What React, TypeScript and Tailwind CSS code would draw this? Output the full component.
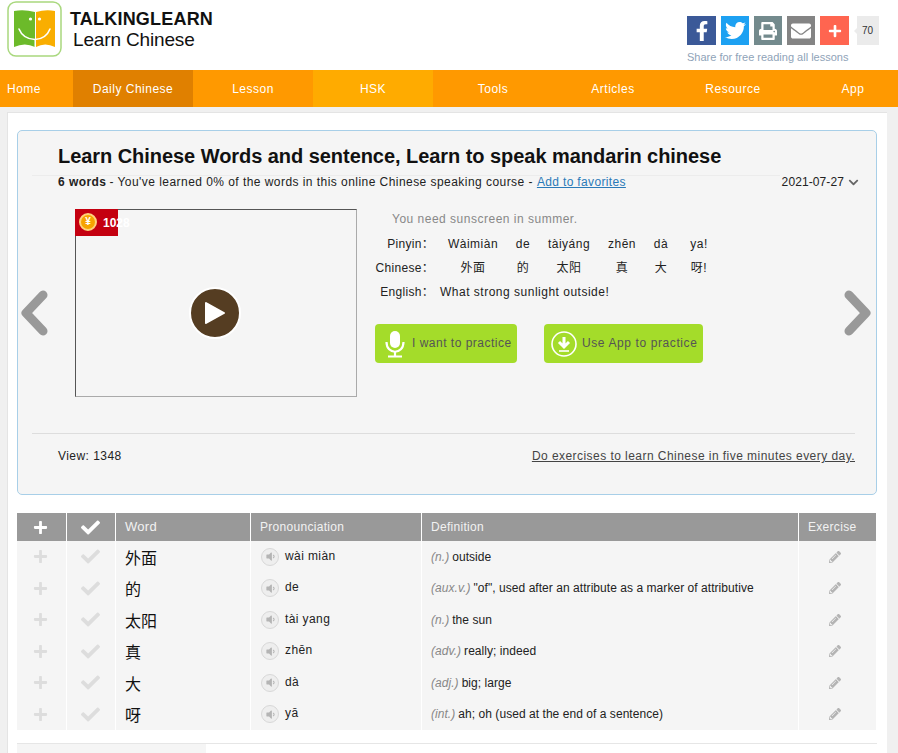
import React from "react";
import { FaFacebookF, FaTwitter, FaPrint, FaEnvelope, FaPlus, FaCheck, FaPencilAlt, FaVolumeDown, FaChevronDown } from "react-icons/fa";

const navItems = [
  { label: "Home", w: "w-[73px] justify-start pl-[7px]", bg: "" },
  { label: "Daily Chinese", w: "w-[120px] justify-center", bg: "bg-[#e08000]" },
  { label: "Lesson", w: "w-[120px] justify-center", bg: "" },
  { label: "HSK", w: "w-[120px] justify-center", bg: "bg-[#ffab00]" },
  { label: "Tools", w: "w-[120px] justify-center", bg: "" },
  { label: "Articles", w: "w-[120px] justify-center", bg: "" },
  { label: "Resource", w: "w-[120px] justify-center", bg: "" },
  { label: "App", w: "w-[120px] justify-center", bg: "" },
];

const rows = [
  { zh: "外面", py: "wài miàn", pos: "(n.)", def: "outside" },
  { zh: "的", py: "de", pos: "(aux.v.)", def: "\"of\", used after an attribute as a marker of attributive" },
  { zh: "太阳", py: "tài yang", pos: "(n.)", def: "the sun" },
  { zh: "真", py: "zhēn", pos: "(adv.)", def: "really; indeed" },
  { zh: "大", py: "dà", pos: "(adj.)", def: "big; large" },
  { zh: "呀", py: "yā", pos: "(int.)", def: "ah; oh (used at the end of a sentence)" },
];

const cols = "grid grid-cols-[50px_49px_135px_171px_377px_77px]";
const pinyin = ["Wàimiàn", "de", "tàiyáng", "zhēn", "dà", "ya!"];
const hanzi = ["外面", "的", "太阳", "真", "大", "呀!"];
const sentenceCols = "grid grid-cols-[55px_10px_66px_34px_58px_48px_30px_46px]";

function Logo() {
  return (
    <svg width="56" height="56" viewBox="0 0 56 56" className="block">
      <rect x="1" y="1" width="53" height="54" rx="8" fill="#fff" stroke="#a9d87e" strokeWidth="1.5" />
      <path d="M7 10 Q17 8 28 11 L28 46 Q18 41 7 46 Z" fill="#6cba2a" />
      <path d="M29 11 Q39 8 48 10 L48 46 Q38 41 29 46 Z" fill="#f9ae00" />
      <circle cx="23.5" cy="18" r="1.6" fill="#fff" />
      <circle cx="32.5" cy="18" r="1.6" fill="#fff" />
      <path d="M12 28 Q16 38 28 38.5 Q39 38 43 28" fill="none" stroke="#fff" strokeWidth="1.6" strokeLinecap="round" />
      <path d="M28 38 V46" stroke="#fff" strokeWidth="1" />
    </svg>
  );
}

function ShareButton({ color, children }: { color: string; children: React.ReactNode }) {
  return <div className={`flex h-[29px] items-center justify-center text-white ${color}`}>{children}</div>;
}

function Speaker() {
  return (
    <span className="flex h-[18px] w-[18px] shrink-0 items-center justify-center rounded-full border border-[#d8d8d8] bg-[#eeeeee] text-[#b4b4b4]">
      <FaVolumeDown size={11} />
    </span>
  );
}

function Chevron({ dir }: { dir: "left" | "right" }) {
  return (
    <svg width="30" height="48" viewBox="0 0 30 48" className="block">
      <path
        d={dir === "left" ? "M24 6 L7 24 L24 42" : "M6 6 L23 24 L6 42"}
        fill="none"
        stroke="#999999"
        strokeWidth="9"
        strokeLinecap="round"
        strokeLinejoin="round"
      />
    </svg>
  );
}

export default function App() {
  return (
    <div className="h-[753px] w-[898px] overflow-hidden bg-[#f0f0f0] font-['Liberation_Sans','Noto_Sans_CJK_SC',sans-serif] text-[12px] text-[#222]">
      <header className="flex h-[70px] bg-white">
        <div className="ml-[7px] mt-[1px]"><Logo /></div>
        <div className="ml-[7px] mt-[9px] text-[#111]">
          <div className="text-[18px] font-bold leading-[20px] tracking-[0.2px]">TALKINGLEARN</div>
          <div className="ml-[3px] text-[19px] leading-[21px] tracking-[-0.15px]">Learn Chinese</div>
        </div>
        <div className="ml-auto mr-[19px] mt-[16px] w-[192px]">
          <div className="grid grid-cols-[29px_28px_28px_28px_29px_22px] gap-x-[5px]">
            <ShareButton color="bg-[#3b5998]"><FaFacebookF size={20} /></ShareButton>
            <ShareButton color="bg-[#1da1f2]"><FaTwitter size={21} /></ShareButton>
            <ShareButton color="bg-[#738a8d]"><FaPrint size={18} /></ShareButton>
            <ShareButton color="bg-[#848484]"><FaEnvelope size={20} /></ShareButton>
            <ShareButton color="bg-[#ff6550]"><FaPlus size={14} /></ShareButton>
            <div className="relative ml-[3px] flex h-[29px] w-[22px] items-center justify-center bg-[#ebebeb] text-[10px] text-[#333]">
              <span className="absolute -left-[3px] top-[12px] h-0 w-0 border-y-[3px] border-r-[3px] border-y-transparent border-r-[#ebebeb]" />
              <span className="-ml-[1px]">70</span>
            </div>
          </div>
          <div className="mt-[6px] text-[11px] leading-[13px] text-[#8fa3b8]">Share for free reading all lessons</div>
        </div>
      </header>

      <nav className="flex h-[37px] overflow-hidden bg-[#ff9900]">
        {navItems.map((n) => (
          <div key={n.label} className={`flex h-full shrink-0 items-center text-[12px] tracking-[0.5px] text-white ${n.w} ${n.bg}`}>
            {n.label}
          </div>
        ))}
      </nav>

      <main className="ml-[7px] mt-[5px] h-[641px] w-[880px] border-l border-t border-[#e4e4e4] bg-white pl-[9px] pt-[17px]">
        <section className="relative h-[365px] w-[860px] rounded-[5px] border border-[#a8cfe8] bg-[#f5f5f5]">
          <div className="ml-[14px] mt-[12px] w-[748px] border-b border-[#ececec] pb-[6px] pl-[26px]">
            <h1 className="whitespace-nowrap text-[20px] font-bold leading-[26px] tracking-[-0.05px] text-[#111]">
              Learn Chinese Words and sentence, Learn to speak mandarin chinese
            </h1>
          </div>
          <div className="-mt-[1px] flex h-[14px] items-center pl-[40px] pr-[17px] leading-[14px] tracking-[0.45px]">
            <b className="text-[#222]">6 words</b>
            <span className="ml-[3px]">- You've learned 0% of the words in this online Chinese speaking course -</span>
            <a className="ml-[4px] tracking-[0.35px] text-[#2a7ab8] underline">Add to favorites</a>
            <span className="ml-auto tracking-[0.1px]">2021-07-27</span>
            <FaChevronDown size={11} className="ml-[4px] text-[#666]" />
          </div>

          <div className="ml-[57px] mt-[20px] flex">
            <div className="relative flex h-[188px] w-[282px] items-center justify-center border border-b-[#aaaaaa] border-l-[#555555] border-r-[#aaaaaa] border-t-[#555555]">
              <div className="absolute -left-px -top-px h-[27px] w-[43px] bg-[#c40010]">
                <span className="absolute left-[4px] top-[4px] flex h-[18px] w-[18px] items-center justify-center rounded-full border-2 border-[#ffd27a] bg-[#f6a400] text-[10px] font-bold leading-none text-white">¥</span>
                <span className="absolute left-[28px] top-[7px] text-[12px] font-bold leading-[14px] text-white">1028</span>
              </div>
              <span className="-ml-[2px] mt-[19px] flex h-[52px] w-[52px] items-center justify-center rounded-full border-2 border-white bg-[#553d22]">
                <svg width="22" height="24" viewBox="0 0 22 24">
                  <path d="M2 2 L20 12 L2 22 Z" fill="#fff" stroke="#fff" strokeWidth="2" strokeLinejoin="round" />
                </svg>
              </span>
            </div>

            <div className="ml-[18px] w-[350px] tracking-[0.5px]">
              <div className="ml-[17px] h-[20px] leading-[20px] text-[#888]">You need sunscreen in summer.</div>
              <div className={`${sentenceCols} mt-[3px] h-[24px] items-center text-center`}>
                <span className="col-span-2 whitespace-nowrap pr-[6px] text-right tracking-[0.3px]">Pinyin：</span>
                {pinyin.map((p) => <span key={p} className="whitespace-nowrap">{p}</span>)}
              </div>
              <div className={`${sentenceCols} h-[24px] items-center text-center`}>
                <span className="col-span-2 whitespace-nowrap pr-[6px] text-right tracking-[0.3px]">Chinese：</span>
                {hanzi.map((p) => <span key={p} className="whitespace-nowrap">{p}</span>)}
              </div>
              <div className={`${sentenceCols} h-[24px] items-center`}>
                <span className="col-span-2 whitespace-nowrap pr-[6px] text-right tracking-[0.3px]">English：</span>
                <span className="col-span-6 whitespace-nowrap">What strong sunlight outside!</span>
              </div>
              <div className="mt-[20px] flex gap-[27px] text-[#555]">
                <div className="flex h-[39px] w-[142px] items-center rounded-[4px] bg-[#a4dc2a] pl-[10px]">
                  <svg width="20" height="28" viewBox="0 0 20 28" className="shrink-0">
                    <rect x="5" y="1" width="10" height="17" rx="5" fill="#fff" />
                    <path d="M1.5 12 C1.5 25 18.5 25 18.5 12" fill="none" stroke="#fff" strokeWidth="2.2" />
                    <path d="M10 21 V26 M3 26.5 H17" stroke="#fff" strokeWidth="2.2" />
                  </svg>
                  <span className="mb-[2px] ml-[7px] whitespace-nowrap">I want to practice</span>
                </div>
                <div className="flex h-[39px] w-[159px] items-center rounded-[4px] bg-[#a4dc2a] pl-[7px]">
                  <svg width="26" height="26" viewBox="0 0 26 26" className="shrink-0">
                    <circle cx="13" cy="13" r="12" fill="none" stroke="#fff" strokeWidth="1.6" />
                    <path d="M13 6 V14 M8 11 L13 16 L18 11" fill="none" stroke="#fff" strokeWidth="3" />
                    <path d="M8 20 H18" stroke="#fff" strokeWidth="1.6" />
                  </svg>
                  <span className="mb-[2px] ml-[5px] whitespace-nowrap tracking-[0.6px]">Use App to practice</span>
                </div>
              </div>
            </div>
          </div>

          <div className="ml-[14px] mr-[21px] mt-[36px] flex items-center border-t border-[#dddddd] pl-[26px] pt-[15px] leading-[14px] tracking-[0.45px]">
            <span>View: 1348</span>
            <a className="ml-auto text-[#444] underline">Do exercises to learn Chinese in five minutes every day.</a>
          </div>

          <div className="absolute left-[1px] top-[158px]"><Chevron dir="left" /></div>
          <div className="absolute right-[3px] top-[158px]"><Chevron dir="right" /></div>
        </section>

        <section className="mt-[18px] w-[859px]">
          <div className={`${cols} h-[28px] bg-[#999999] tracking-[0.3px] text-[#f2f2f2]`}>
            <div className="flex items-center justify-center border-r border-white pr-[2px] text-white"><FaPlus size={15} /></div>
            <div className="flex items-center justify-center border-r border-white pr-[2px] text-white"><FaCheck size={19} /></div>
            <div className="flex items-center border-r border-white pl-[9px] text-[13px]">Word</div>
            <div className="flex items-center border-r border-white pl-[9px]">Pronounciation</div>
            <div className="flex items-center border-r border-white pl-[9px]">Definition</div>
            <div className="flex items-center pl-[9px]">Exercise</div>
          </div>
          {rows.map((r) => (
            <div key={r.zh} className={`${cols} h-[31.5px] bg-[#f5f5f5]`}>
              <div className="flex items-center justify-center border-r border-white pr-[2px] text-[#dddddd]"><FaPlus size={15} /></div>
              <div className="flex items-center justify-center border-r border-white pr-[2px] text-[#dddddd]"><FaCheck size={19} /></div>
              <div className="flex items-center border-r border-white pl-[9px] text-[16px] text-[#111]">
                <span className="translate-y-[2px]">{r.zh}</span>
              </div>
              <div className="flex items-center border-r border-white pl-[10px]">
                <Speaker />
                <span className="ml-[6px] -translate-y-[1px] tracking-[0.4px]">{r.py}</span>
              </div>
              <div className="flex items-center whitespace-nowrap border-r border-white pl-[9px] tracking-[0.05px]">
                <i className="text-[#888]">{r.pos}</i>
                <span className="ml-[3px]">{r.def}</span>
              </div>
              <div className="flex items-center justify-center pr-[6px] text-[#b4b4b4]"><FaPencilAlt size={12} /></div>
            </div>
          ))}
        </section>

        <div className="mt-[13px] w-[860px] border-t border-[#e6e6e6]">
          <div className="h-[10px] w-[189px] bg-[#f5f5f5]" />
        </div>
      </main>
    </div>
  );
}
